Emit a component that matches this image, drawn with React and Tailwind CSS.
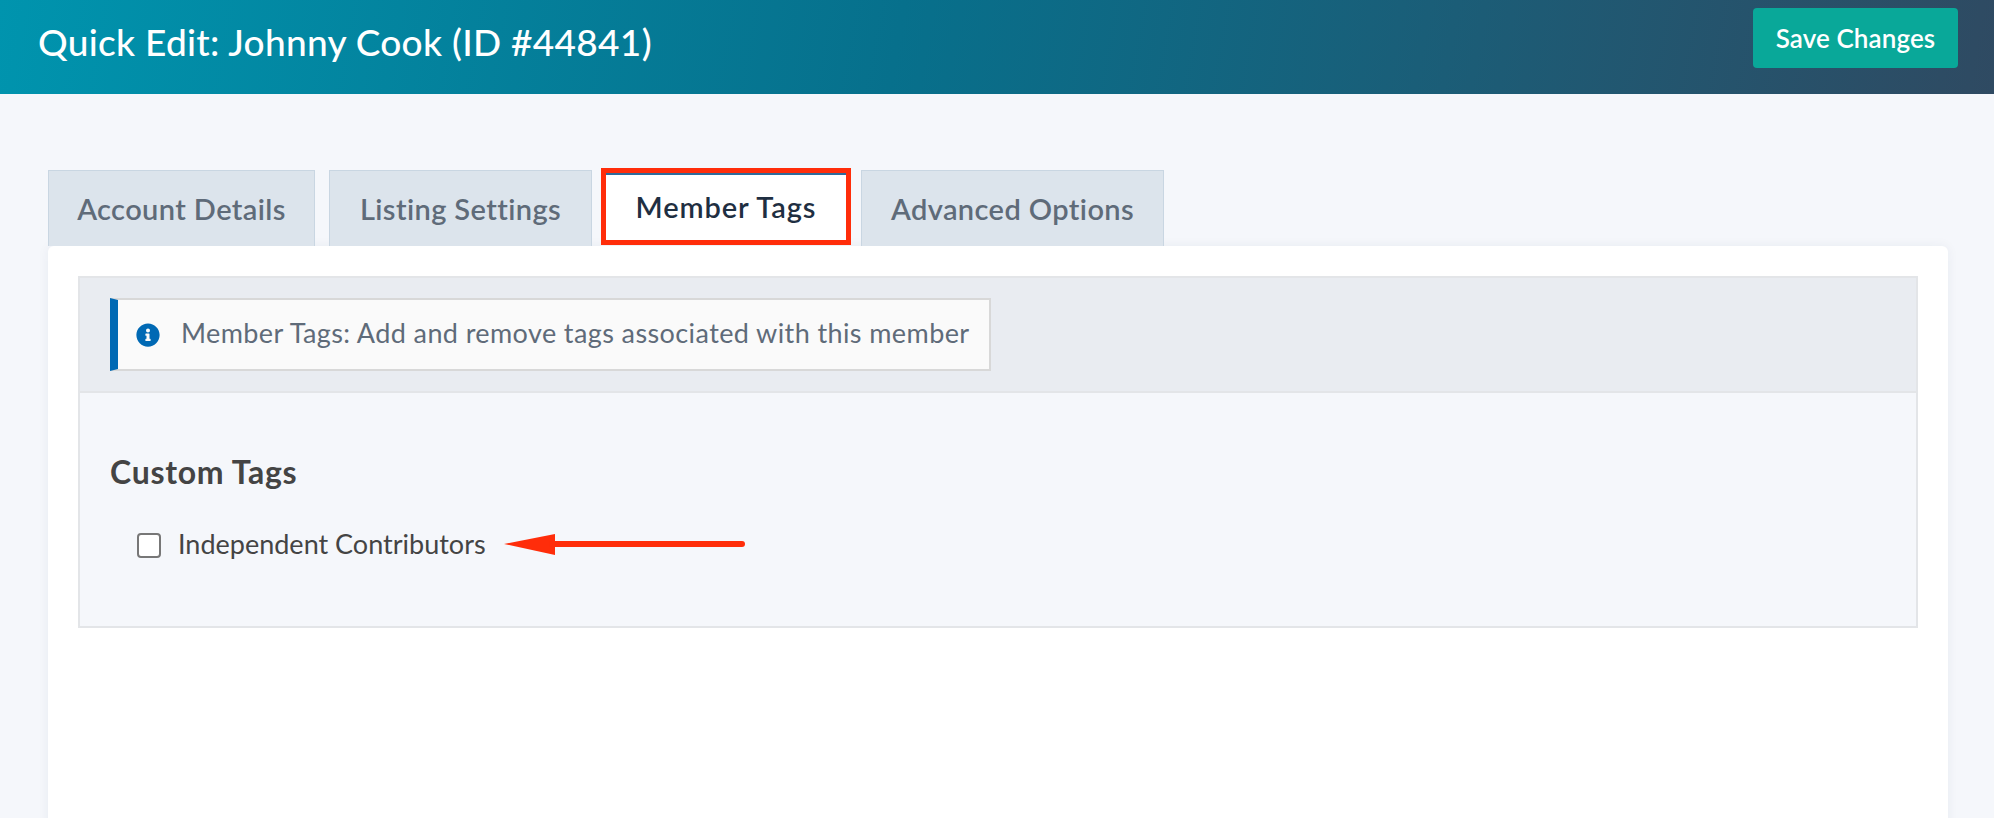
import React from 'react';

const tabs = [
  { label: 'Account Details', width: 'w-[267px]' },
  { label: 'Listing Settings', width: 'w-[263px] ml-[14px]' },
  { label: 'Member Tags', width: 'w-[250px] ml-[9px]', active: true },
  { label: 'Advanced Options', width: 'w-[303px] ml-[10px]' },
];

function App() {
  return (
    <div className="h-[818px] overflow-hidden bg-[#f5f7fb] font-['Lato',sans-serif]">
      {/* Header */}
      <div className="flex h-[94px] items-start justify-between bg-[linear-gradient(100deg,#0094ae_0%,#07708c_45%,#2f4a62_100%)] pl-[38px] pr-[36px]">
        <h1 className="mt-[18px] text-[37px] leading-[48px] font-medium tracking-[0.3px] text-white">
          Quick Edit: Johnny Cook (ID #44841)
        </h1>
        <button className="mt-[8px] flex h-[60px] w-[205px] items-center justify-center rounded-[4px] bg-[#09a899] text-[26px] font-semibold tracking-[0.1px] text-white">
          Save Changes
        </button>
      </div>

      <div className="relative pl-[48px] pr-[46px] pt-[74px]">
        {/* Tabs */}
        <div className="flex h-[78px] items-start">
          {tabs.map((tab) =>
            tab.active ? (
              <div
                key={tab.label}
                className={`${tab.width} flex h-[77px] items-center justify-center border-[5px] border-[#ff2d0a] bg-white text-[29px] font-semibold tracking-[0.9px] text-[#1f2f42] shadow-[inset_0_2px_0_#2f6a9a]`}
              >
                {tab.label}
              </div>
            ) : (
              <div
                key={tab.label}
                className={`${tab.width} mt-[2px] flex h-[76px] items-center justify-center border border-b-0 border-[#c9d6e2] bg-[#dce4ec] text-[29px] font-semibold tracking-[0.4px] text-[#5f6b79]`}
              >
                {tab.label}
              </div>
            ),
          )}
        </div>

        {/* Card */}
        <div className="h-[600px] rounded-[6px] bg-white px-[30px] pt-[30px] shadow-[0_0_12px_rgba(40,50,80,0.06)]">
          <div className="border-2 border-[#e3e5e8] bg-[#f5f7fb]">
            <div className="h-[115px] border-b-2 border-[#e3e5e8] bg-[#e9ecf1] pl-[30px] pt-[20px]">
              <div className="flex h-[73px] w-[881px] items-center border-2 border-l-[8px] border-[#d8d8d8] border-l-[#0069b4] bg-[#fafafa] pl-[18px]">
                <svg width="24" height="24" viewBox="0 0 512 512" className="shrink-0">
                  <path
                    fill="#0069b4"
                    d="M256 8C119 8 8 119 8 256s111 248 248 248 248-111 248-248S393 8 256 8zm0 110c23.200 0 42 18.800 42 42s-18.800 42-42 42-42-18.800-42-42 18.800-42 42-42zm56 254c0 6.600-5.400 12-12 12h-88c-6.600 0-12-5.400-12-12v-24c0-6.600 5.400-12 12-12h12v-64h-12c-6.600 0-12-5.400-12-12v-24c0-6.600 5.400-12 12-12h64c6.600 0 12 5.400 12 12v100h12c6.600 0 12 5.400 12 12v24z"
                  />
                </svg>
                <span className="ml-[21px] -mt-[2px] text-[27px] tracking-[0.4px] text-[#5f6b79]">
                  Member Tags: Add and remove tags associated with this member
                </span>
              </div>
            </div>
            <div className="h-[233px] pl-[30px] pt-[59px]">
              <h2 className="text-[32px] leading-[40px] font-bold tracking-[0.7px] text-[#444444]">Custom Tags</h2>
              <label className="mt-[39px] ml-[27px] flex items-center">
                <span className="h-[25px] w-[24px] rounded-[4px] border-2 border-[#777777] bg-white"></span>
                <span className="ml-[17px] -mt-[2px] text-[27px] leading-[30px] text-[#444444]">Independent Contributors</span>
              </label>
            </div>
          </div>
        </div>

        {/* Red arrow annotation */}
        <svg width="250" height="24" viewBox="0 0 250 24" className="absolute left-[502px] top-[439px]">
          <path d="M2 11 L53 1 L53 22 Z" fill="#ff2d0a" />
          <path d="M50 11 H240" stroke="#ff2d0a" strokeWidth="6" strokeLinecap="round" />
        </svg>
      </div>
    </div>
  );
}

export default App;
